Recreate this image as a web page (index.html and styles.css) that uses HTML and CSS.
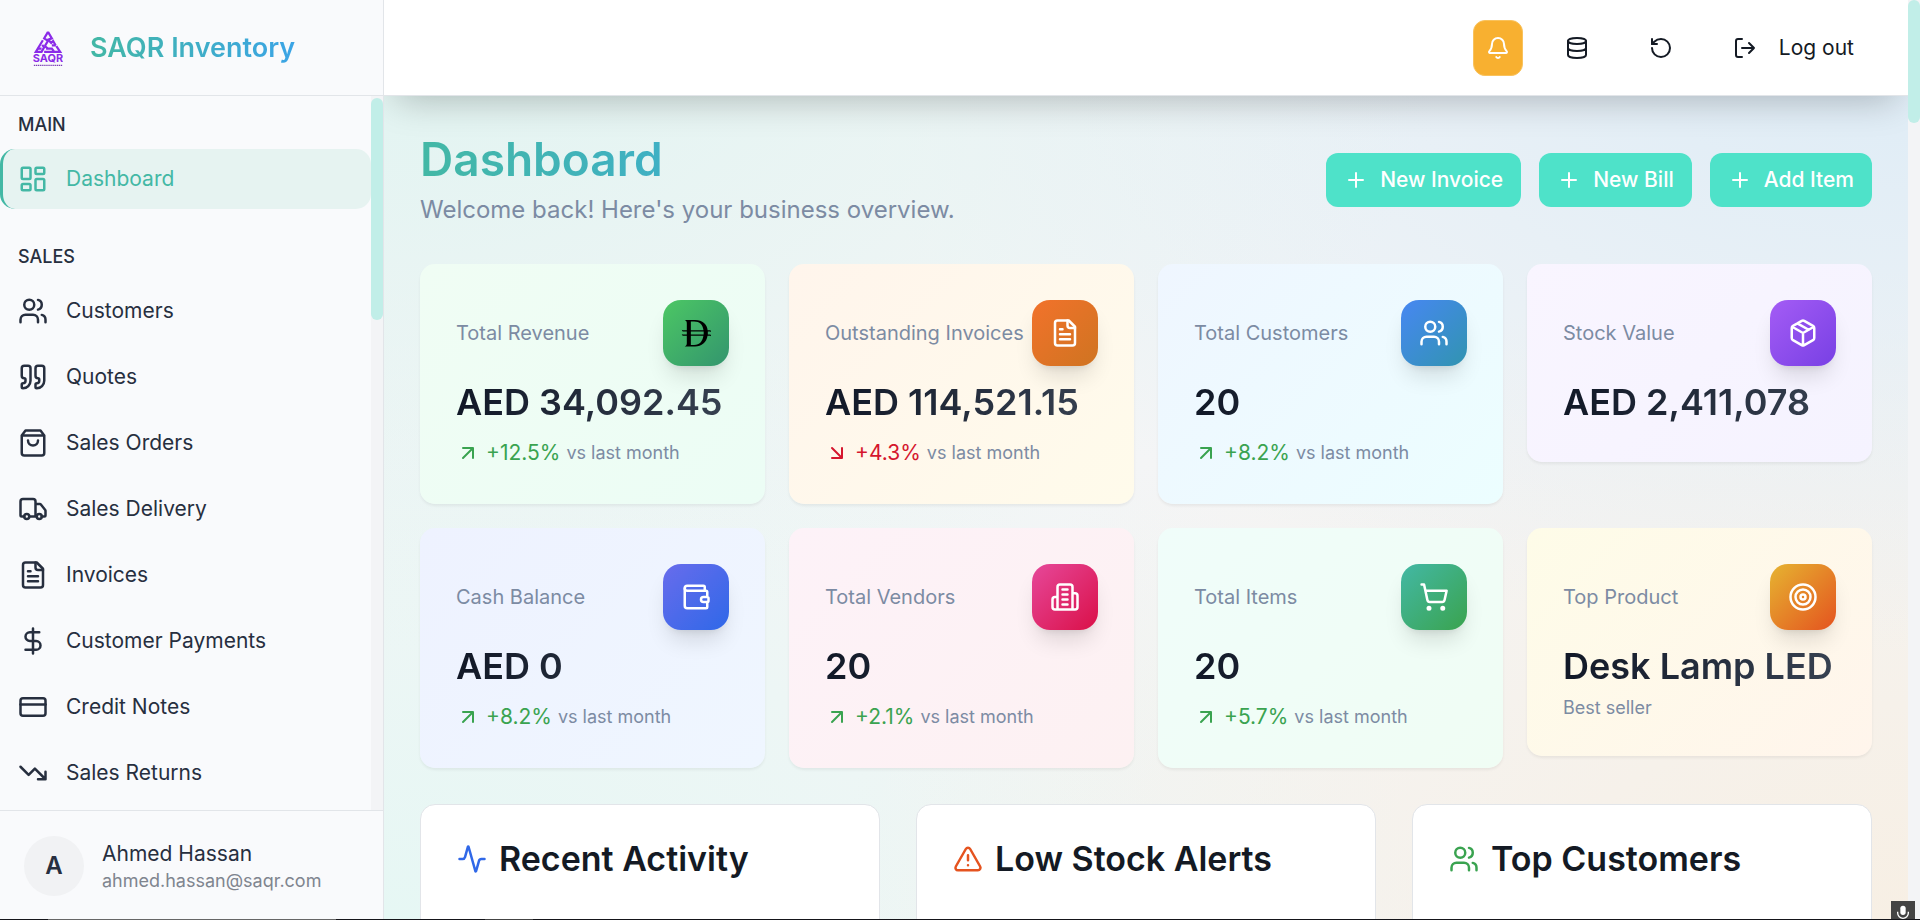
FILE: index.html
```
<!DOCTYPE html>
<html lang="en">
<head>
  <meta charset="UTF-8">
  <meta name="viewport" content="width=device-width, initial-scale=1.0">
  <title>SAQR Inventory</title>
  <link rel="stylesheet" href="styles.css">
</head>
<body>

  <!-- shared icons -->
  <svg class="sprite" aria-hidden="true">
    <symbol id="i-users" viewBox="0 0 24 24"><path d="M16 21v-2a4 4 0 0 0-4-4H6a4 4 0 0 0-4 4v2"/><circle cx="9" cy="7" r="4"/><path d="M22 21v-2a4 4 0 0 0-3-3.87M16 3.13a4 4 0 0 1 0 7.75"/></symbol>
    <symbol id="i-file" viewBox="0 0 24 24"><path d="M15 2H6a2 2 0 0 0-2 2v16a2 2 0 0 0 2 2h12a2 2 0 0 0 2-2V7Z"/><path d="M14 2v4a2 2 0 0 0 2 2h4M10 9H8M16 13H8M16 17H8"/></symbol>
    <symbol id="i-plus" viewBox="0 0 24 24"><path d="M5 12h14M12 5v14"/></symbol>
    <symbol id="i-up" viewBox="0 0 24 24"><path d="M7 7h10v10M7 17 17 7"/></symbol>
    <symbol id="i-down" viewBox="0 0 24 24"><path d="m7 7 10 10M17 7v10H7"/></symbol>
  </svg>

  <div class="app">
    <aside class="sidebar">
      <div class="brand">
        <svg class="logo" viewBox="0 0 46 56" role="img" aria-label="SAQR">
          <g fill="none" stroke="#8b2be8" stroke-width="3.4">
            <path d="M23 3 17 13l6 4-5 8"/>
            <path d="M23 3l6 10-6 2 5 5 3-3 4 7"/>
            <path d="M15 16 4 34h9l4-7-3-4"/>
            <path d="M7 29h6M17 34h25L36 25M20 29h9l3 4M18 25l5 4M29 24h6"/>
          </g>
          <text x="23" y="50" text-anchor="middle">SAQR</text>
          <path d="M1 55h44" stroke="#7b3fb5" stroke-width="2" stroke-dasharray="2 1"/>
        </svg>
        <span class="brand-name">SAQR Inventory</span>
      </div>

      <div class="nav-wrap">
        <nav class="nav">
          <div class="nav-group">
            <h2 class="nav-label">MAIN</h2>
            <a class="nav-item active" href="#"><svg class="icon" viewBox="0 0 24 24"><rect width="7" height="9" x="3" y="3" rx="1"/><rect width="7" height="5" x="14" y="3" rx="1"/><rect width="7" height="9" x="14" y="12" rx="1"/><rect width="7" height="5" x="3" y="16" rx="1"/></svg>Dashboard</a>
          </div>
          <div class="nav-group">
            <h2 class="nav-label">SALES</h2>
            <a class="nav-item" href="#"><svg class="icon"><use href="#i-users"/></svg>Customers</a>
            <a class="nav-item" href="#"><svg class="icon" viewBox="0 0 24 24"><path d="M16 3a2 2 0 0 0-2 2v6a2 2 0 0 0 2 2 1 1 0 0 1 1 1v1a2 2 0 0 1-2 2 1 1 0 0 0-1 1v2a1 1 0 0 0 1 1 6 6 0 0 0 6-6V5a2 2 0 0 0-2-2zM5 3a2 2 0 0 0-2 2v6a2 2 0 0 0 2 2 1 1 0 0 1 1 1v1a2 2 0 0 1-2 2 1 1 0 0 0-1 1v2a1 1 0 0 0 1 1 6 6 0 0 0 6-6V5a2 2 0 0 0-2-2z"/></svg>Quotes</a>
            <a class="nav-item" href="#"><svg class="icon" viewBox="0 0 24 24"><path d="M6 2 3 6v14a2 2 0 0 0 2 2h14a2 2 0 0 0 2-2V6l-3-4ZM3 6h18M16 10a4 4 0 0 1-8 0"/></svg>Sales Orders</a>
            <a class="nav-item" href="#"><svg class="icon" viewBox="0 0 24 24"><path d="M14 18V6a2 2 0 0 0-2-2H4a2 2 0 0 0-2 2v11a1 1 0 0 0 1 1h2M15 18H9M19 18h2a1 1 0 0 0 1-1v-3.65a1 1 0 0 0-.22-.624l-3.48-4.35A1 1 0 0 0 17.52 8H14"/><circle cx="17" cy="18" r="2"/><circle cx="7" cy="18" r="2"/></svg>Sales Delivery</a>
            <a class="nav-item" href="#"><svg class="icon"><use href="#i-file"/></svg>Invoices</a>
            <a class="nav-item" href="#"><svg class="icon" viewBox="0 0 24 24"><path d="M12 2v20M17 5H9.500a3.500 3.500 0 0 0 0 7h5a3.500 3.500 0 0 1 0 7H6"/></svg>Customer Payments</a>
            <a class="nav-item" href="#"><svg class="icon" viewBox="0 0 24 24"><rect width="20" height="14" x="2" y="5" rx="2"/><path d="M2 10h20"/></svg>Credit Notes</a>
            <a class="nav-item" href="#"><svg class="icon" viewBox="0 0 24 24"><path d="m22 17-8.500-8.500-5 5L2 7M16 17h6v-6"/></svg>Sales Returns</a>
          </div>
        </nav>
        <div class="scrollbar nav-scroll"><div class="thumb"></div></div>
      </div>

      <div class="profile">
        <span class="avatar">A</span>
        <div class="profile-text">
          <div class="profile-name">Ahmed Hassan</div>
          <div class="profile-mail">ahmed.hassan@saqr.com</div>
        </div>
      </div>
    </aside>

    <div class="page">
      <header class="topbar">
        <button class="top-btn bell" aria-label="Notifications"><svg class="icon" viewBox="0 0 24 24"><path d="M10.268 21a2 2 0 0 0 3.464 0M3.262 15.326A1 1 0 0 0 4 17h16a1 1 0 0 0 .74-1.673C19.410 13.956 18 12.499 18 8A6 6 0 0 0 6 8c0 4.499-1.411 5.956-2.738 7.326"/></svg></button>
        <button class="top-btn" aria-label="Backup"><svg class="icon" viewBox="0 0 24 24"><ellipse cx="12" cy="5" rx="9" ry="3"/><path d="M3 5v14a9 3 0 0 0 18 0V5M3 12a9 3 0 0 0 18 0"/></svg></button>
        <button class="top-btn" aria-label="Restore"><svg class="icon" viewBox="0 0 24 24"><path d="M3 12a9 9 0 1 0 9-9 9.750 9.750 0 0 0-6.740 2.740L3 8"/><path d="M3 3v5h5"/></svg></button>
        <button class="top-btn"><svg class="icon" viewBox="0 0 24 24"><path d="M9 21H5a2 2 0 0 1-2-2V5a2 2 0 0 1 2-2h4M16 17l5-5-5-5M21 12H9"/></svg>Log out</button>
      </header>

      <main class="content">
        <div class="heading">
          <div>
            <h1>Dashboard</h1>
            <p class="subtitle">Welcome back! Here's your business overview.</p>
          </div>
          <div class="actions">
            <button class="btn"><svg class="icon"><use href="#i-plus"/></svg>New Invoice</button>
            <button class="btn"><svg class="icon"><use href="#i-plus"/></svg>New Bill</button>
            <button class="btn"><svg class="icon"><use href="#i-plus"/></svg>Add Item</button>
          </div>
        </div>

        <section class="stats">
          <article class="card revenue">
            <div class="card-head">
              <h3>Total Revenue</h3>
              <span class="badge"><svg class="dirham" viewBox="0 0 32 32"><path fill="#000" fill-rule="evenodd" d="M4 2h11c8 0 13 5 13.400 11H31c.8 0 1.200.8 1.200 2-.6-.6-1.100-.6-1.900-.6h-1.700v3.200H31c.8 0 1.200.8 1.200 2-.6-.6-1.100-.6-1.900-.6h-2C27.300 26 22 30.500 15 30.500H4c2-1 2.200-2 2.200-4V19H2.500C1.700 19 1 18.200.9 17c.6.500 1 .6 1.800.6h3.500v-3.200H2.500C1.700 14.400 1 13.600.9 12.400c.6.500 1 .6 1.800.6h3.500V6c0-2-.2-3-2.200-4zm6.500 1.800V13H24c-.8-6-4-9.200-10-9.200zm0 10.600v3.200h13.700v-3.200zm0 4.600v9.700H14c6 0 9-3.700 9.900-9.700z"/></svg></span>
            </div>
            <div class="value"><span>AED 34,092.45</span></div>
            <div class="trend"><svg class="icon"><use href="#i-up"/></svg>+12.5%<small>vs last month</small></div>
          </article>
          <article class="card outstanding">
            <div class="card-head">
              <h3>Outstanding Invoices</h3>
              <span class="badge"><svg class="icon"><use href="#i-file"/></svg></span>
            </div>
            <div class="value"><span>AED 114,521.15</span></div>
            <div class="trend down"><svg class="icon"><use href="#i-down"/></svg>+4.3%<small>vs last month</small></div>
          </article>
          <article class="card customers">
            <div class="card-head">
              <h3>Total Customers</h3>
              <span class="badge"><svg class="icon"><use href="#i-users"/></svg></span>
            </div>
            <div class="value"><span>20</span></div>
            <div class="trend"><svg class="icon"><use href="#i-up"/></svg>+8.2%<small>vs last month</small></div>
          </article>
          <article class="card stock">
            <div class="card-head">
              <h3>Stock Value</h3>
              <span class="badge"><svg class="icon" viewBox="0 0 24 24"><path d="M11 21.730a2 2 0 0 0 2 0l7-4A2 2 0 0 0 21 16V8a2 2 0 0 0-1-1.730l-7-4a2 2 0 0 0-2 0l-7 4A2 2 0 0 0 3 8v8a2 2 0 0 0 1 1.730zM12 22V12M3.290 7 12 12l8.710-5M7.500 4.270l9 5.150"/></svg></span>
            </div>
            <div class="value"><span>AED 2,411,078</span></div>
          </article>
          <article class="card cash">
            <div class="card-head">
              <h3>Cash Balance</h3>
              <span class="badge"><svg class="icon" viewBox="0 0 24 24"><path d="M19 7V4a1 1 0 0 0-1-1H5a2 2 0 0 0 0 4h15a1 1 0 0 1 1 1v4h-3a2 2 0 0 0 0 4h3a1 1 0 0 0 1-1v-2a1 1 0 0 0-1-1"/><path d="M3 5v14a2 2 0 0 0 2 2h15a1 1 0 0 0 1-1v-4"/></svg></span>
            </div>
            <div class="value"><span>AED 0</span></div>
            <div class="trend"><svg class="icon"><use href="#i-up"/></svg>+8.2%<small>vs last month</small></div>
          </article>
          <article class="card vendors">
            <div class="card-head">
              <h3>Total Vendors</h3>
              <span class="badge"><svg class="icon" viewBox="0 0 24 24"><path d="M6 22V4a2 2 0 0 1 2-2h8a2 2 0 0 1 2 2v18ZM6 12H4a2 2 0 0 0-2 2v6a2 2 0 0 0 2 2h2M18 9h2a2 2 0 0 1 2 2v9a2 2 0 0 1-2 2h-2M10 6h4M10 10h4M10 14h4M10 18h4"/></svg></span>
            </div>
            <div class="value"><span>20</span></div>
            <div class="trend"><svg class="icon"><use href="#i-up"/></svg>+2.1%<small>vs last month</small></div>
          </article>
          <article class="card items">
            <div class="card-head">
              <h3>Total Items</h3>
              <span class="badge"><svg class="icon" viewBox="0 0 24 24"><circle cx="8" cy="21" r="1"/><circle cx="19" cy="21" r="1"/><path d="M2.050 2.050h2l2.660 12.420a2 2 0 0 0 2 1.580h9.780a2 2 0 0 0 1.950-1.570l1.650-7.430H5.120"/></svg></span>
            </div>
            <div class="value"><span>20</span></div>
            <div class="trend"><svg class="icon"><use href="#i-up"/></svg>+5.7%<small>vs last month</small></div>
          </article>
          <article class="card product">
            <div class="card-head">
              <h3>Top Product</h3>
              <span class="badge"><svg class="icon" viewBox="0 0 24 24"><circle cx="12" cy="12" r="10"/><circle cx="12" cy="12" r="6"/><circle cx="12" cy="12" r="2"/></svg></span>
            </div>
            <div class="value"><span>Desk Lamp LED</span></div>
            <p class="note">Best seller</p>
          </article>
        </section>

        <section class="panels">
          <div class="panel">
            <h2><svg class="icon blue" viewBox="0 0 24 24"><path d="M22 12h-2.480a2 2 0 0 0-1.930 1.460l-2.350 8.360a.25.25 0 0 1-.48 0L9.240 2.180a.25.25 0 0 0-.48 0l-2.350 8.360A2 2 0 0 1 4.490 12H2"/></svg>Recent Activity</h2>
          </div>
          <div class="panel">
            <h2><svg class="icon orange" viewBox="0 0 24 24"><path d="m21.730 18-8-14a2 2 0 0 0-3.480 0l-8 14A2 2 0 0 0 4 21h16a2 2 0 0 0 1.730-3M12 9v4M12 17h.01"/></svg>Low Stock Alerts</h2>
          </div>
          <div class="panel">
            <h2><svg class="icon green"><use href="#i-users"/></svg>Top Customers</h2>
          </div>
        </section>
      </main>
    </div>

    <div class="scrollbar page-scroll"><div class="thumb"></div></div>
  </div>

  <div class="mic"><svg viewBox="0 0 24 24"><rect x="8" y="1" width="8" height="14" rx="4" fill="#fff"/><path d="M4 10v2a8 8 0 0 0 16 0v-2M12 20v4" fill="none" stroke="#fff" stroke-width="2"/></svg></div>
  <div class="bottom-line"></div>

</body>
</html>
```

FILE: styles.css
```
* {
  box-sizing: border-box;
}

body {
  margin: 0;
  font-family: Inter, "Liberation Sans", sans-serif;
  font-size: 21px;
  line-height: 30px;
  color: #141a24;
  overflow: hidden;
}

h1, h2, h3, p {
  margin: 0;
  font-weight: 500;
}

button {
  font: inherit;
  color: inherit;
  border: none;
  background: none;
  cursor: pointer;
}

.sprite {
  display: none;
}

.icon {
  width: 24px;
  height: 24px;
  flex: none;
  fill: none;
  stroke: currentColor;
  stroke-width: 2;
  stroke-linecap: round;
  stroke-linejoin: round;
}

.app {
  display: flex;
  height: 100vh;
}

/* sidebar */
.sidebar {
  position: relative;
  z-index: 2;
  width: 384px;
  flex: none;
  display: flex;
  flex-direction: column;
  background: #f9fafc;
  border-right: 1px solid #e2e5e9;
  color: #272f3f;
}

.brand {
  height: 96px;
  flex: none;
  display: flex;
  align-items: center;
  gap: 27px;
  padding: 0 33px;
  border-bottom: 1px solid #e2e5e9;
}

.logo {
  width: 30px;
  height: 36px;
}

.logo text {
  font-size: 17px;
  font-weight: 700;
  fill: #8b2be8;
}

.brand-name {
  font-size: 27px;
  font-weight: 600;
  line-height: 36px;
  background: linear-gradient(90deg, #43b8a5, #3ba4e6);
  -webkit-background-clip: text;
  background-clip: text;
  color: transparent;
}

.nav-wrap {
  flex: 1;
  min-height: 0;
  display: flex;
}

.nav {
  flex: 1;
  overflow: hidden;
  padding-top: 5px;
}

.nav-group {
  display: flex;
  flex-direction: column;
  margin-bottom: 24px;
}

.nav-label {
  padding: 0 18px;
  font-size: 18px;
  line-height: 48px;
}

.nav-item {
  display: flex;
  align-items: center;
  gap: 18px;
  height: 60px;
  margin-bottom: 6px;
  padding: 0 15px;
  border-left: 3px solid transparent;
  border-radius: 15px;
  color: inherit;
  text-decoration: none;
}

.nav-item:last-child {
  margin-bottom: 0;
}

.nav-item .icon {
  width: 30px;
  height: 30px;
}

.nav-item.active {
  color: #43b8a5;
  background: #e6f3f1;
  border-left-color: #43b8a5;
}

.scrollbar {
  width: 12px;
  flex: none;
  background: #f3f4f6;
}

.thumb {
  border-radius: 6px;
  background: #c1eee8;
}

.nav-scroll {
  padding-top: 2px;
}

.nav-scroll .thumb {
  height: 222px;
}

.page-scroll {
  position: relative;
  z-index: 2;
}

.page-scroll .thumb {
  height: 123px;
}

.profile {
  display: flex;
  align-items: center;
  gap: 18px;
  height: 110px;
  flex: none;
  padding: 0 24px;
  border-top: 1px solid #e2e5e9;
}

.avatar {
  width: 60px;
  height: 60px;
  border-radius: 50%;
  background: #f1f2f4;
  font-size: 24px;
  font-weight: 600;
  line-height: 60px;
  text-align: center;
}

.profile-mail {
  font-size: 18px;
  line-height: 24px;
  color: #7f858f;
}

/* page */
.page {
  flex: 1;
  min-width: 0;
  display: flex;
  flex-direction: column;
  background:
    radial-gradient(at 0% 0%, #e0f4f1 0, transparent 50%),
    radial-gradient(at 100% 0%, #dcebf6 0, transparent 50%),
    radial-gradient(at 100% 100%, #f7efe4 0, transparent 50%),
    radial-gradient(at 0% 100%, #e6f7f4 0, transparent 50%),
    #f4f5f6;
}

.topbar {
  position: relative;
  height: 96px;
  flex: none;
  display: flex;
  align-items: center;
  justify-content: flex-end;
  gap: 24px;
  padding: 0 36px;
  background: #fff;
  border-bottom: 1px solid #e2e5e9;
  box-shadow: 0 15px 36px -12px rgba(0, 0, 0, 0.25);
}

.top-btn {
  display: flex;
  align-items: center;
  gap: 22px;
  height: 56px;
  padding: 0 18px;
  border-radius: 12px;
}

.bell {
  padding: 0 12px;
  color: #fff;
  background: #f8b030;
  border: 1px solid #f9c25c;
}

.content {
  flex: 1;
  min-height: 0;
  overflow: hidden;
  padding: 36px 36px 0;
}

.heading {
  display: flex;
  align-items: center;
  justify-content: space-between;
  height: 96px;
  margin-bottom: 36px;
}

h1 {
  width: fit-content;
  margin-bottom: 6px;
  font-size: 46px;
  font-weight: 600;
  line-height: 54px;
  background: linear-gradient(90deg, #43b8a5, #3fb0c4);
  -webkit-background-clip: text;
  background-clip: text;
  color: transparent;
}

.subtitle {
  font-size: 24px;
  font-weight: 400;
  line-height: 36px;
  color: #7c8ba3;
}

.actions {
  display: flex;
  gap: 18px;
}

.btn {
  display: flex;
  align-items: center;
  gap: 12px;
  height: 54px;
  padding: 0 18px;
  border-radius: 12px;
  background: #4ee2c9;
  color: #fff;
  font-weight: 500;
}

.stats {
  display: grid;
  grid-template-columns: repeat(4, 1fr);
  align-items: start;
  gap: 24px;
  margin-bottom: 36px;
}

.card {
  padding: 36px;
  border-radius: 15px;
  box-shadow: 0 2px 3px rgba(0, 0, 0, 0.06);
}

.card-head {
  display: flex;
  align-items: center;
  justify-content: space-between;
  margin-bottom: 12px;
}

.card-head h3 {
  font-size: 20px;
  font-weight: 400;
  color: #7c8ba3;
  white-space: nowrap;
}

.badge {
  display: grid;
  place-items: center;
  width: 66px;
  height: 66px;
  flex: none;
  border-radius: 18px;
  color: #fff;
  box-shadow: 0 15px 22px -5px rgba(0, 0, 0, 0.12), 0 6px 9px -6px rgba(0, 0, 0, 0.12);
}

.badge .icon,
.dirham {
  width: 30px;
  height: 30px;
}

.value {
  font-size: 36px;
  font-weight: 600;
  line-height: 48px;
  white-space: nowrap;
}

.value span {
  background: linear-gradient(90deg, #111827, #374151 273px);
  -webkit-background-clip: text;
  background-clip: text;
  color: transparent;
}

.trend {
  display: flex;
  align-items: center;
  gap: 6px;
  margin-top: 12px;
  color: #3aa350;
}

.trend.down {
  color: #d5162e;
}

.trend small,
.note {
  font-size: 18px;
  font-weight: 400;
  color: #7c8ba3;
}

.note {
  margin-top: 6px;
  line-height: 24px;
}

.revenue { background: linear-gradient(135deg, #f0fdf4, #ecfdf5); }
.outstanding { background: linear-gradient(135deg, #fff5ec, #fffbeb); }
.customers { background: linear-gradient(135deg, #eff6ff, #ecfeff); }
.stock { background: linear-gradient(135deg, #f9f5ff, #f5f3ff); }
.cash { background: linear-gradient(135deg, #eef2ff, #eff6ff); }
.vendors { background: linear-gradient(135deg, #fdf2f8, #fdf1f2); }
.items { background: linear-gradient(135deg, #f0fdfa, #f0fdf4); }
.product { background: linear-gradient(135deg, #fefce8, #fff5ec); }

.revenue .badge { background: linear-gradient(135deg, #4cc764, #33956e); }
.outstanding .badge { background: linear-gradient(135deg, #f2722b, #cf7421); }
.customers .badge { background: linear-gradient(135deg, #4787f2, #3194b0); }
.stock .badge { background: linear-gradient(135deg, #a45cf5, #7840e4); }
.cash .badge { background: linear-gradient(135deg, #686cec, #2f68e8); }
.vendors .badge { background: linear-gradient(135deg, #e6489a, #da1048); }
.items .badge { background: linear-gradient(135deg, #43b8a5, #3aa34e); }
.product .badge { background: linear-gradient(135deg, #e6b431, #e4531f); }

.panels {
  display: grid;
  grid-template-columns: repeat(3, 1fr);
  gap: 36px;
}

.panel {
  min-height: 300px;
  padding: 36px;
  background: #fff;
  border: 1px solid #e2e5e9;
  border-radius: 15px;
}

.panel h2 {
  display: flex;
  align-items: center;
  gap: 12px;
  font-size: 34px;
  font-weight: 600;
  line-height: 36px;
  white-space: nowrap;
}

.panel .icon {
  width: 30px;
  height: 30px;
}

.blue { color: #3068e8; }
.orange { color: #e5531f; }
.green { color: #3aa350; }

.mic {
  position: fixed;
  z-index: 3;
  right: 5px;
  bottom: 0;
  width: 24px;
  height: 19px;
  overflow: hidden;
  background: #444;
}

.mic svg {
  display: block;
  width: 16px;
  height: 16px;
  margin: 4px auto 0;
}

.bottom-line {
  position: fixed;
  z-index: 3;
  left: 0;
  right: 0;
  bottom: 0;
  height: 1px;
  background: linear-gradient(90deg, #15151a 48px, #666 48px, #666 336px, #15151a 336px, #15151a 485px, #444 485px, #444 533px, #15151a 533px);
}
```
